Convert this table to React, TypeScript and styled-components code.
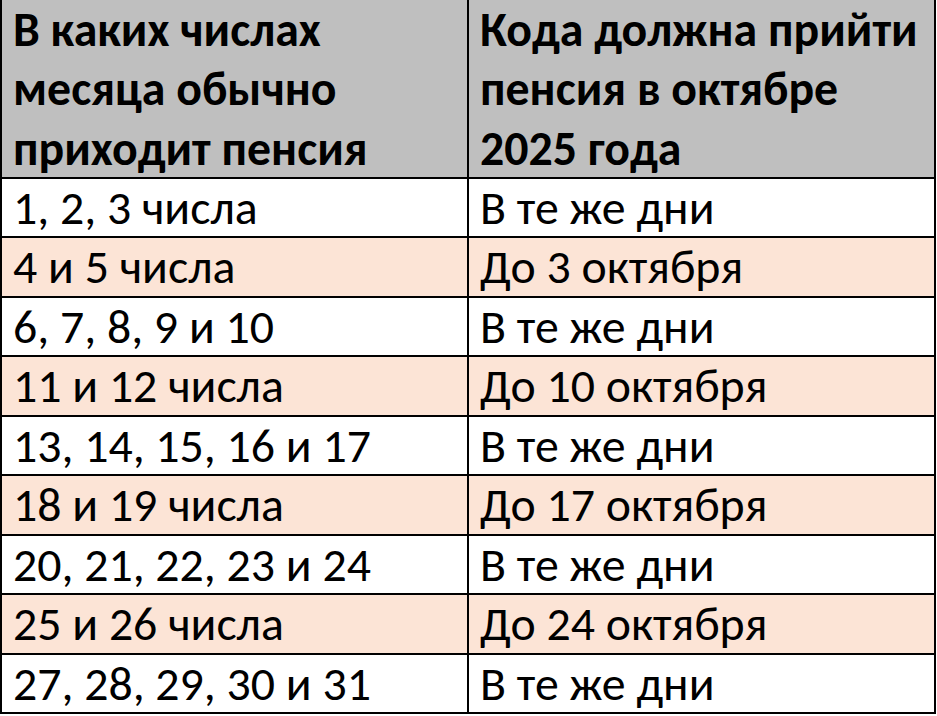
import { Fragment } from 'react';
import styled, { createGlobalStyle } from 'styled-components';

const GlobalStyle = createGlobalStyle`
  html, body {
    margin: 0;
    padding: 0;
    background: #ffffff;
  }
  body {
    font-family: Calibri, Carlito, "Open Sans", "Noto Sans", sans-serif;
    color: #000;
  }
`;

const Table = styled.div`
  display: grid;
  grid-template-columns: 469px 467px;
  grid-template-rows: 179px;
  grid-auto-rows: 59.44px;
  width: 936px;
`;

const Cell = styled.div<{ $head?: boolean; $shade?: boolean; $first?: boolean }>`
  box-sizing: border-box;
  display: flex;
  padding: 0 4px 0 11px;
  border-right: 2px solid #000;
  border-bottom: 2px solid #000;
  border-left: ${({ $first }) => ($first ? '2px solid #000' : 'none')};
  background: ${({ $head, $shade }) => ($head ? '#bfbfbf' : $shade ? '#fce4d6' : '#ffffff')};
  font-size: 47.8px;
  font-weight: ${({ $head }) => ($head ? 700 : 400)};
  line-height: 59.44px;
  white-space: nowrap;
  overflow: hidden;
  align-items: ${({ $head }) => ($head ? 'flex-start' : 'center')};
`;

const HeadText = styled.span`
  display: block;
`;

const ROWS: [string, string][] = [
  ['1, 2, 3 числа', 'В те же дни'],
  ['4 и 5 числа', 'До 3 октября'],
  ['6, 7, 8, 9 и 10', 'В те же дни'],
  ['11 и 12 числа', 'До 10 октября'],
  ['13, 14, 15, 16 и 17', 'В те же дни'],
  ['18 и 19 числа', 'До 17 октября'],
  ['20, 21, 22, 23 и 24', 'В те же дни'],
  ['25 и 26 числа', 'До 24 октября'],
  ['27, 28, 29, 30 и 31', 'В те же дни'],
];

export default function App() {
  return (
    <>
      <GlobalStyle />
      <Table>
        <Cell $head $first>
          <HeadText>
            В каких числах
            <br />
            месяца обычно
            <br />
            приходит пенсия
          </HeadText>
        </Cell>
        <Cell $head>
          <HeadText>
            Кода должна прийти
            <br />
            пенсия в октябре
            <br />
            2025 года
          </HeadText>
        </Cell>
        {ROWS.map(([when, oct], i) => (
          <Fragment key={i}>
            <Cell $first $shade={i % 2 === 1}>
              {when}
            </Cell>
            <Cell $shade={i % 2 === 1}>{oct}</Cell>
          </Fragment>
        ))}
      </Table>
    </>
  );
}
